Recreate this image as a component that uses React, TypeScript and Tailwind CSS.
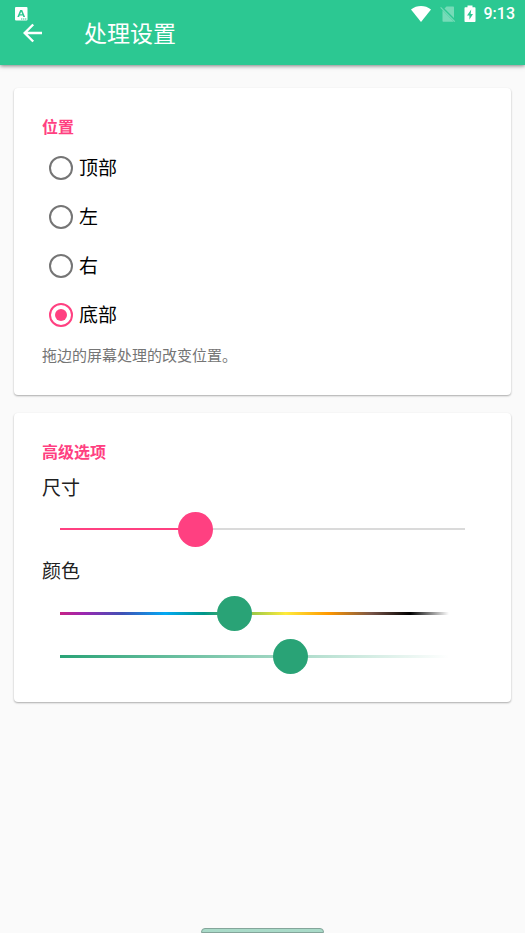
import { useState } from 'react';
import type { CSSProperties, ReactNode } from 'react';
import clsx from 'clsx';

const POSITIONS = [
  { id: 'top', label: '顶部' },
  { id: 'left', label: '左' },
  { id: 'right', label: '右' },
  { id: 'bottom', label: '底部' },
];

const HUES =
  'linear-gradient(to right, #e91e63 -5%, #9c27b0 6%, #3f51b5 16%, #03a9f4 27%, #009688 37%, #8bc34a 48%, #ffeb3b 58%, #ff9800 69%, #795548 80%, #000 90%, transparent)';
const ALPHA = 'linear-gradient(to right, #29a376, transparent)';

function StatusBar() {
  return (
    <div className="absolute inset-x-0 top-0 flex h-7 items-center justify-between pr-2.5 pl-3.5 text-white">
      <svg width="14" height="14" viewBox="0 0 14 14" aria-hidden="true">
        <rect x="1" width="12.500" height="13.500" rx="1" fill="currentColor" />
        <path d="M3.300 10 6.200 3h2l2.900 7H9.300l-.5-1.400H5.600L5.100 10zM6.100 7.200h2.200L7.200 4.700z" fill="#2cc892" />
        <path d="M7 12h5.500" stroke="#2cc892" strokeDasharray="1.4 .6" />
      </svg>
      <div className="flex items-center">
        <svg width="22" height="18" viewBox="0 0 22 18" className="mr-2" aria-hidden="true">
          <path d="M1 4.500C7-.1 15-.1 21 4.500L11 17z" fill="currentColor" />
        </svg>
        <svg width="16" height="18" viewBox="0 0 16 18" className="mr-2 opacity-35" aria-hidden="true">
          <path d="M6.500 1.500H13c.6 0 1 .4 1 1v10.600L4.500 3.500zM2.500 5.300 13.600 16.500c-.2.200-.4.200-.6.200H3.500c-.6 0-1-.4-1-1z" fill="currentColor" />
          <path d="m.6 2.400 14.200 14.300" stroke="currentColor" strokeWidth="1.200" />
        </svg>
        <svg width="12" height="18" viewBox="0 0 12 18" className="mr-2" aria-hidden="true">
          <path d="M3.500 .5h5v1.800h2c.6 0 1 .4 1 1V16c0 .6-.4 1-1 1h-9c-.6 0-1-.4-1-1V3.300c0-.6.4-1 1-1h2z" fill="currentColor" />
          <path d="M7.200 4.500 3 10.500h2.400v4.200L9 8.900H6.700z" fill="#2cc892" />
        </svg>
        <span className="font-[Roboto,sans-serif] text-[16px] leading-5 font-medium">9:13</span>
      </div>
    </div>
  );
}

function Card({ title, children }: { title: string; children: ReactNode }) {
  return (
    <section className="rounded-sm bg-white px-7 pt-[26px] pb-7 shadow-[0_1px_2px_rgba(0,0,0,0.32)]">
      <h2 className="text-[16px] leading-6 font-bold text-[#ff4081]">{title}</h2>
      {children}
    </section>
  );
}

type SliderProps = {
  label: string;
  value: number;
  onChange: (v: number) => void;
  track: string;
  thick?: boolean;
  green?: boolean;
};

function Slider({ label, value, onChange, track, thick, green }: SliderProps) {
  const style: CSSProperties = { backgroundImage: track };
  return (
    <input
      type="range"
      min={0}
      max={1000}
      aria-label={label}
      value={value}
      onChange={(e) => onChange(Number(e.target.value))}
      style={style}
      className={clsx(
        'block h-9 w-full cursor-pointer appearance-none bg-transparent bg-center bg-no-repeat',
        '[&::-webkit-slider-thumb]:size-[35px] [&::-webkit-slider-thumb]:appearance-none [&::-webkit-slider-thumb]:rounded-full',
        thick ? 'bg-[length:calc(100%-36px)_3px]' : 'bg-[length:calc(100%-36px)_2px]',
        green ? '[&::-webkit-slider-thumb]:bg-[#29a376]' : '[&::-webkit-slider-thumb]:bg-[#ff4081]',
      )}
    />
  );
}

export default function App() {
  const [position, setPosition] = useState('bottom');
  const [size, setSize] = useState(335);
  const [hue, setHue] = useState(448);
  const [alpha, setAlpha] = useState(593);

  const sizeTrack = `linear-gradient(to right, #ff4081 ${size / 10}%, #dadada ${size / 10}%)`;

  return (
    <div className="flex min-h-screen flex-col bg-[#fafafa] font-['Noto_Sans_CJK_SC',sans-serif]">
      <header className="relative flex h-[65px] items-center bg-[#2cc892] pl-5 text-white shadow-[0_1px_4px_rgba(0,0,0,0.5)]">
        <StatusBar />
        <button type="button" aria-label="返回" className="mr-10 cursor-pointer">
          <svg width="24" height="24" viewBox="0 0 24 24" fill="none" stroke="currentColor" strokeWidth="2.400" aria-hidden="true">
            <path d="M22 12H5M13.200 3.500 4.700 12l8.500 8.500" />
          </svg>
        </button>
        <h1 className="pb-0.5 text-[23px] leading-8 font-normal">处理设置</h1>
      </header>

      <main className="flex flex-1 flex-col gap-[18px] px-3.5 pt-[23px]">
        <Card title="位置">
          <div role="radiogroup" aria-label="位置" className="pt-[5px]">
            {POSITIONS.map((p) => (
              <label key={p.id} className="flex h-[49px] cursor-pointer items-center gap-1.5 pl-[7px] text-[19px] text-black">
                <input
                  type="radio"
                  name="position"
                  value={p.id}
                  checked={position === p.id}
                  onChange={() => setPosition(p.id)}
                  className="grid size-6 appearance-none place-items-center rounded-full border-2 border-[#757575] before:size-3 before:rounded-full checked:border-[#ff4081] checked:before:bg-[#ff4081]"
                />
                <span>{p.label}</span>
              </label>
            ))}
          </div>
          <p className="pt-1 text-[15px] leading-6 text-[#757575]">拖边的屏幕处理的改变位置。</p>
        </Card>

        <Card title="高级选项">
          <h3 className="pt-2.5 text-[19px] leading-7 text-[#212121]">尺寸</h3>
          <div className="pt-2.5">
            <Slider label="尺寸" value={size} onChange={setSize} track={sizeTrack} />
          </div>
          <h3 className="pt-[9px] text-[19px] leading-7 text-[#212121]">颜色</h3>
          <div className="flex flex-col gap-[7px] pt-[11px] pr-4">
            <Slider label="颜色" value={hue} onChange={setHue} track={HUES} thick green />
            <Slider label="透明度" value={alpha} onChange={setAlpha} track={ALPHA} thick green />
          </div>
        </Card>
      </main>

      <div className="mx-auto h-[5px] w-[123px] rounded-t-sm border border-[#84a59a] bg-[#a9dac8]" />
    </div>
  );
}
